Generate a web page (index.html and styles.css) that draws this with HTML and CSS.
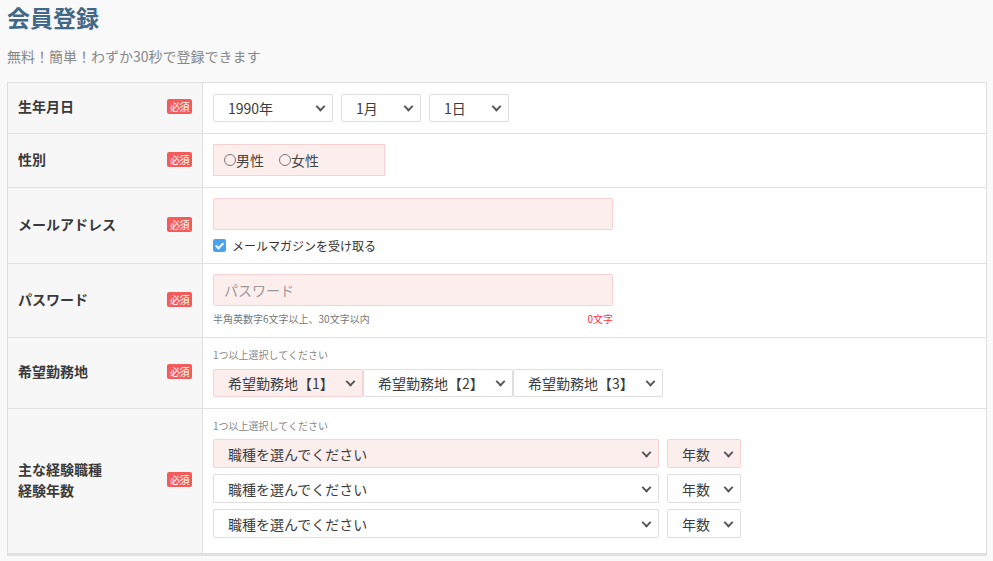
FILE: index.html
```html
<!DOCTYPE html>
<html lang="ja">
<head>
<meta charset="utf-8">
<title>会員登録</title>
<link rel="stylesheet" href="styles.css">
</head>
<body>
<h1 class="title">会員登録</h1>
<p class="lead">無料！簡単！わずか30秒で登録できます</p>

<div class="form">
  <div class="row row-birth">
    <div class="head"><span class="label">生年月日</span><span class="req">必須</span></div>
    <div class="body">
      <div class="inline gap8">
        <div class="sel w120"><select><option>1990年</option></select></div>
        <div class="sel w80"><select><option>1月</option></select></div>
        <div class="sel w80"><select><option>1日</option></select></div>
      </div>
    </div>
  </div>

  <div class="row row-sex">
    <div class="head"><span class="label">性別</span><span class="req">必須</span></div>
    <div class="body">
      <div class="radio-box">
        <label class="radio"><input type="radio" name="sex">男性</label>
        <label class="radio"><input type="radio" name="sex">女性</label>
      </div>
    </div>
  </div>

  <div class="row row-mail">
    <div class="head"><span class="label">メールアドレス</span><span class="req">必須</span></div>
    <div class="body">
      <input class="text-input pink" type="text">
      <label class="check"><input type="checkbox" checked>メールマガジンを受け取る</label>
    </div>
  </div>

  <div class="row row-pass">
    <div class="head"><span class="label">パスワード</span><span class="req">必須</span></div>
    <div class="body">
      <input class="text-input pink" type="password" placeholder="パスワード">
      <div class="hint-row"><span class="hint">半角英数字6文字以上、30文字以内</span><span class="count">0文字</span></div>
    </div>
  </div>

  <div class="row row-area">
    <div class="head"><span class="label">希望勤務地</span><span class="req">必須</span></div>
    <div class="body">
      <p class="note">1つ以上選択してください</p>
      <div class="inline">
        <div class="sel w150 pink"><select><option>希望勤務地【1】</option></select></div>
        <div class="sel w150"><select><option>希望勤務地【2】</option></select></div>
        <div class="sel w150"><select><option>希望勤務地【3】</option></select></div>
      </div>
    </div>
  </div>

  <div class="row row-job">
    <div class="head"><span class="label">主な経験職種<br>経験年数</span><span class="req">必須</span></div>
    <div class="body">
      <p class="note">1つ以上選択してください</p>
      <div class="job-list">
        <div class="inline gap8">
          <div class="sel w446 tall pink"><select><option>職種を選んでください</option></select></div>
          <div class="sel w74 tall pink"><select><option>年数</option></select></div>
        </div>
        <div class="inline gap8">
          <div class="sel w446 tall"><select><option>職種を選んでください</option></select></div>
          <div class="sel w74 tall"><select><option>年数</option></select></div>
        </div>
        <div class="inline gap8">
          <div class="sel w446 tall"><select><option>職種を選んでください</option></select></div>
          <div class="sel w74 tall"><select><option>年数</option></select></div>
        </div>
      </div>
    </div>
  </div>
</div>
</body>
</html>
```

FILE: styles.css
```css
* { box-sizing: border-box; }

html, body {
  margin: 0;
  background: #f9f9f9;
}

body {
  padding: 0 6px 0 7px;
  font-family: "Noto Sans CJK JP", "Noto Sans", sans-serif;
  color: #333;
}

.title {
  margin: 0;
  font-size: 23px;
  line-height: 34px;
  font-weight: bold;
  color: #416887;
}

.lead {
  margin: 12px 0 0;
  font-size: 14px;
  line-height: 20px;
  color: #888;
}

.form {
  margin-top: 16px;
  width: 980px;
  border: 1px solid #e0e0e0;
  border-bottom: 3px solid #e0e0e0;
  background: #fff;
}

.row {
  display: flex;
  border-top: 1px solid #e0e0e0;
}

.row:first-child { border-top: none; }

.head {
  width: 195px;
  flex: none;
  display: flex;
  align-items: center;
  justify-content: space-between;
  padding: 0 10px 3px 10px;
  background: #f7f7f7;
  border-right: 1px solid #e0e0e0;
}

.label {
  font-size: 14px;
  line-height: 21px;
  font-weight: bold;
  color: #3a3a3a;
}

.req {
  display: inline-block;
  width: 25px;
  height: 15px;
  border-radius: 2px;
  background: #f45c5c;
  color: #fff;
  font-size: 10px;
  line-height: 15px;
  text-align: center;
  letter-spacing: -0.5px;
}

.body {
  flex: 1;
  padding: 10px 10px 10px 10px;
}

.row-birth .body { padding-top: 11px; padding-bottom: 11px; }
.row-sex .body { padding-bottom: 11px; }
.row-mail .body { padding-bottom: 8px; }
.row-area .body { padding-bottom: 11px; }
.row-job .body { padding-bottom: 15px; }

.inline {
  display: flex;
  align-items: center;
}

.gap8 { gap: 8px; }

.sel {
  position: relative;
  height: 28px;
}

.sel.tall { height: 29px; }

.sel select {
  appearance: none;
  -webkit-appearance: none;
  width: 100%;
  height: 100%;
  margin: 0;
  padding: 0 20px 0 14px;
  border: 1px solid #dedede;
  border-radius: 2px;
  background: #fff;
  font-family: "Noto Sans CJK JP", "Noto Sans", sans-serif;
  font-size: 14px;
  color: #3c3c3c;
  outline: none;
}

.sel.pink select {
  background: #fdeeee;
  border-color: #f8d2d2;
}

.sel::after {
  content: "";
  position: absolute;
  right: 9px;
  top: 50%;
  width: 5px;
  height: 5px;
  border-right: 2px solid #555;
  border-bottom: 2px solid #555;
  transform: translateY(-70%) rotate(45deg);
  pointer-events: none;
}

.w120 { width: 120px; }
.w80 { width: 80px; }
.w150 { width: 150px; }
.w446 { width: 446px; }
.w74 { width: 74px; }

.radio-box {
  display: flex;
  align-items: center;
  width: 172px;
  height: 32px;
  padding-left: 10px;
  background: #fdeeee;
  border: 1px solid #f8d2d2;
}

.radio {
  display: inline-flex;
  align-items: center;
  font-size: 14px;
  line-height: 20px;
  color: #444;
}

.radio + .radio { margin-left: 15px; }

.radio input {
  appearance: none;
  -webkit-appearance: none;
  width: 12px;
  height: 12px;
  margin: 0;
  border: 1px solid #777;
  border-radius: 50%;
  background: transparent;
}

.text-input {
  display: block;
  width: 400px;
  height: 32px;
  margin: 0;
  padding: 0 10px;
  border: 1px solid #f8d2d2;
  border-radius: 2px;
  background: #fdeeee;
  font-family: "Noto Sans CJK JP", "Noto Sans", sans-serif;
  font-size: 14px;
  color: #333;
  outline: none;
}

.text-input::placeholder { color: #999; }

.check {
  display: flex;
  align-items: center;
  margin-top: 6px;
  height: 19px;
  font-size: 12px;
  color: #333;
}

.check input {
  appearance: none;
  -webkit-appearance: none;
  position: relative;
  width: 13px;
  height: 13px;
  margin: 0 6px 0 0;
  border-radius: 2px;
  background: #4ba3ef;
}

.check input::after {
  content: "";
  position: absolute;
  left: 4px;
  top: 2px;
  width: 3px;
  height: 6px;
  border-right: 2px solid #fff;
  border-bottom: 2px solid #fff;
  transform: rotate(45deg);
}

.hint-row {
  display: flex;
  justify-content: space-between;
  width: 400px;
  margin-top: 5px;
  line-height: 16px;
  font-size: 10px;
}

.hint { color: #777; }
.count { color: #f33; }

.note {
  margin: 0;
  font-size: 10px;
  line-height: 14px;
  color: #888;
}

.row-area .note { margin-bottom: 7px; }
.row-job .note { margin-bottom: 6px; }

.job-list {
  display: flex;
  flex-direction: column;
  gap: 6px;
}
```
